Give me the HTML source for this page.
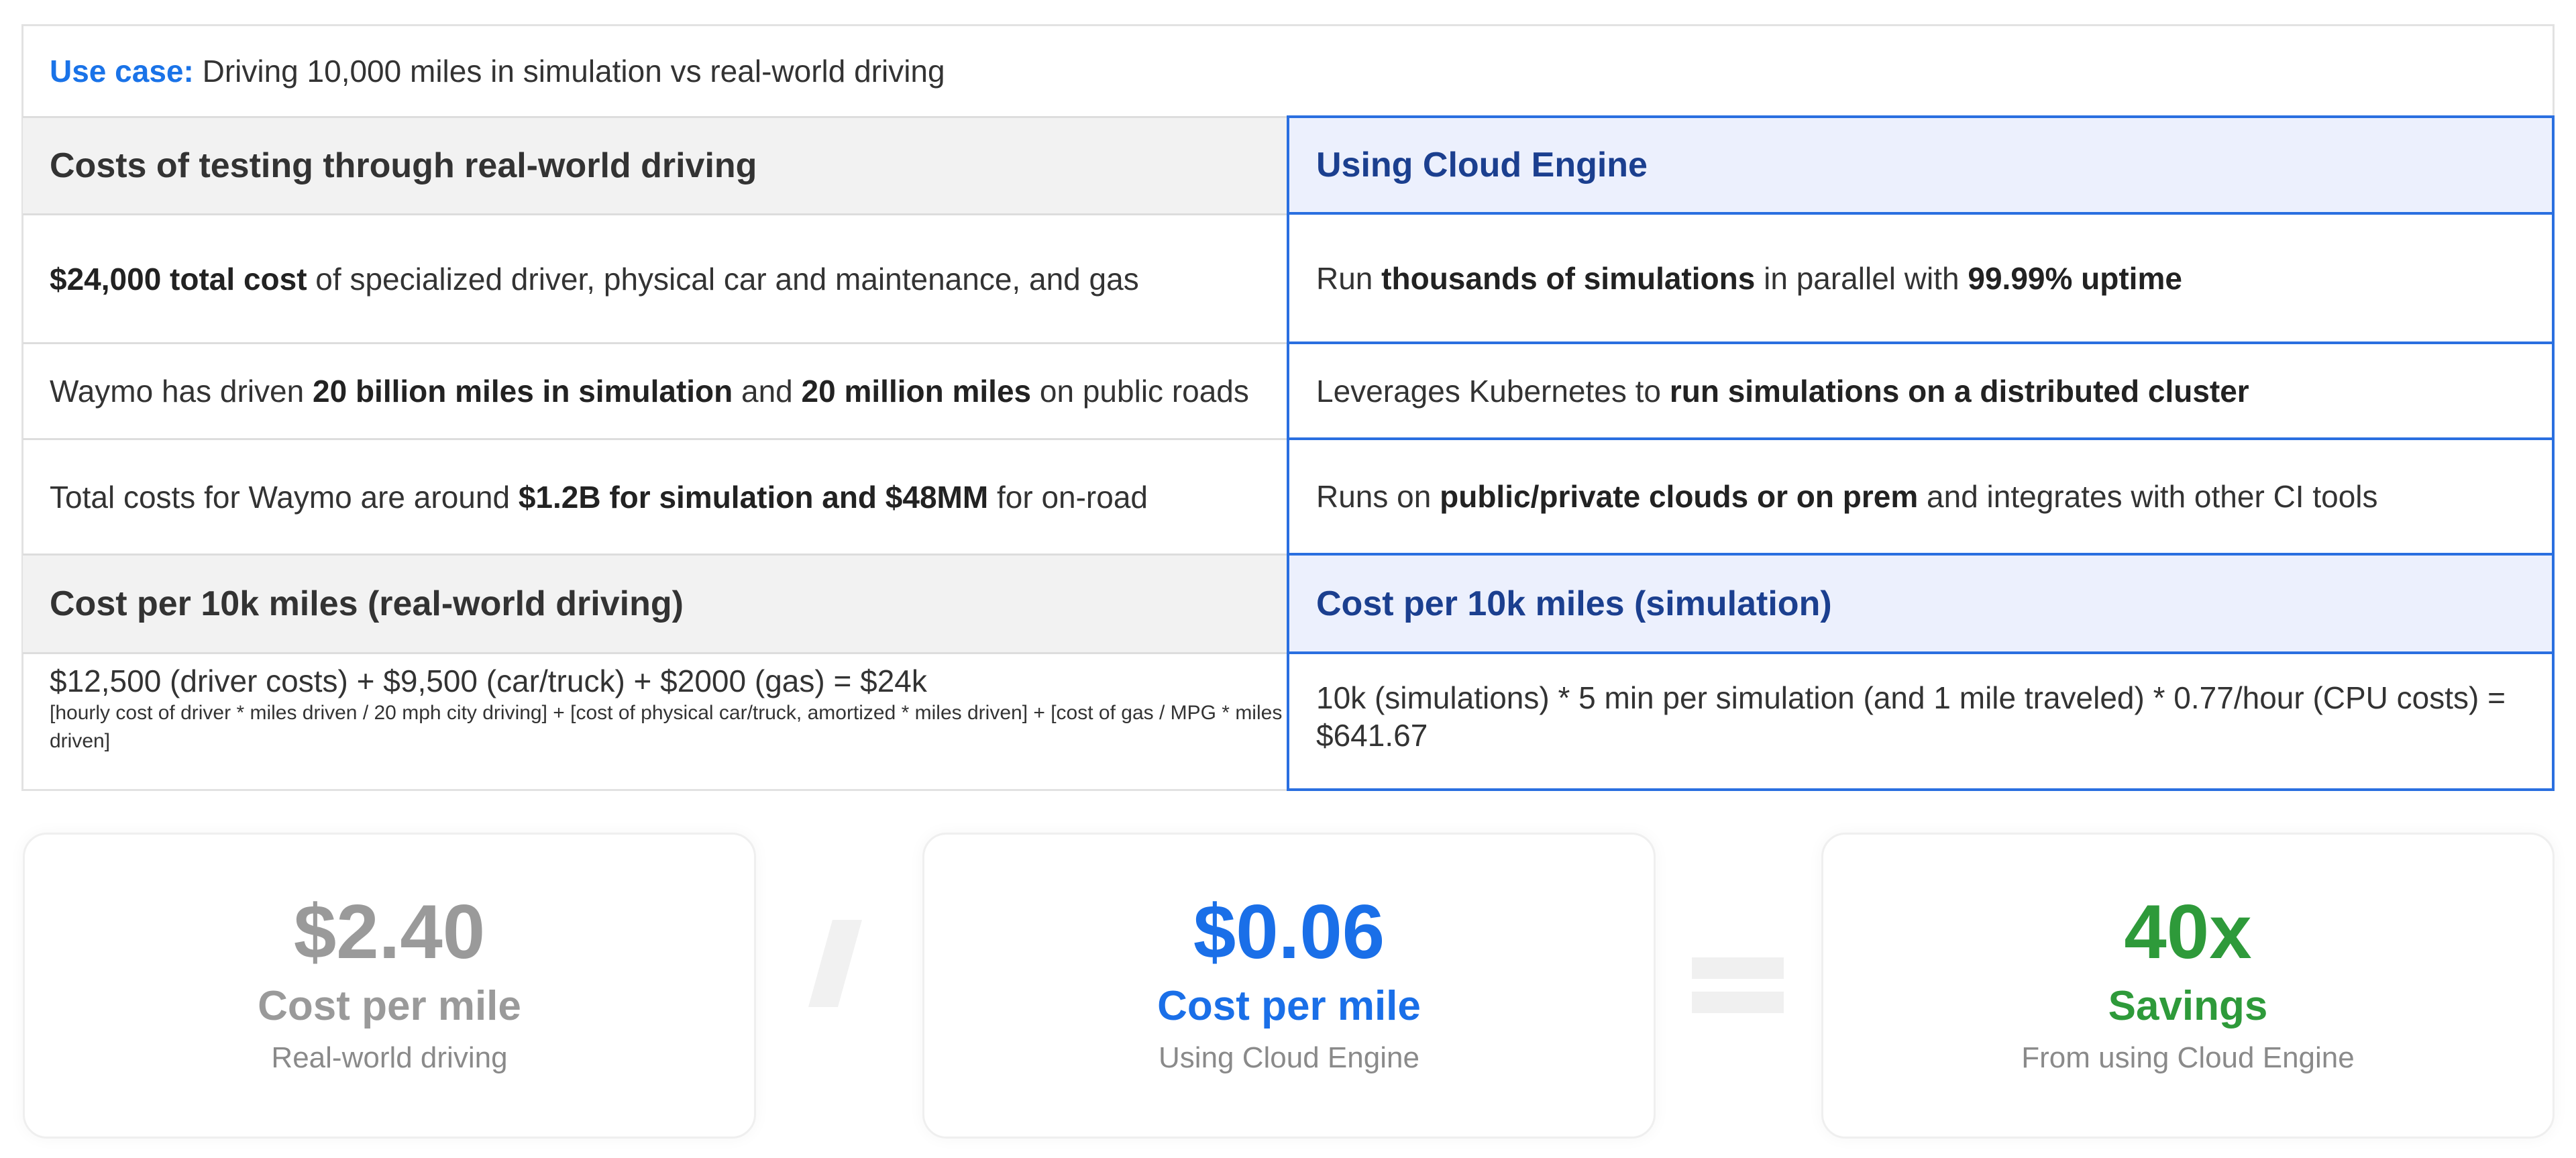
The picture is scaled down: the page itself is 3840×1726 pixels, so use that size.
<!DOCTYPE html>
<html><head><meta charset="utf-8"><style>
*{box-sizing:border-box;margin:0;padding:0}
body{width:3840px;height:1726px;background:#fff;font-family:"Liberation Sans",Arial,sans-serif;position:relative;overflow:hidden;color:#333}
.a{position:absolute}
.cell{position:absolute;display:flex;align-items:center;padding-left:40px;font-size:46px;color:#333;white-space:nowrap}
.hd{font-size:52px;font-weight:bold}
b{font-weight:bold;color:#222}
.card{position:absolute;top:1241px;height:456px;width:1093px;border:3px solid #efefef;border-radius:36px;background:#fff;box-shadow:0 0 24px rgba(0,0,0,0.04);text-align:center}
.big{position:absolute;left:0;right:0;top:80px;font-size:114px;font-weight:bold}
.mid{position:absolute;left:0;right:0;top:220px;font-size:62px;font-weight:bold}
.sub{position:absolute;left:0;right:0;top:308px;font-size:44px;color:#8a8a8a}
</style></head><body>
<div class="a" style="left:32px;top:36px;width:3776px;height:1143px;border:3px solid #e2e2e2"></div>
<div class="cell" style="left:34px;top:38px;width:3772px;height:135px"><span style="color:#1a73e8;font-weight:bold">Use case:</span>&nbsp;Driving 10,000 miles in simulation vs real-world driving</div>
<div class="cell hd" style="left:34px;top:173px;width:1886px;height:148px;background:#f2f2f2;border-top:3px solid #ddd;border-bottom:3px solid #ddd">Costs of testing through real-world driving</div>
<div class="cell" style="left:34px;top:321px;width:1886px;height:192px;border-bottom:3px solid #ddd"><span><b>$24,000 total cost</b> of specialized driver, physical car and maintenance, and gas</span></div>
<div class="cell" style="left:34px;top:513px;width:1886px;height:143px;border-bottom:3px solid #ddd"><span>Waymo has driven <b>20 billion miles in simulation</b> and <b>20 million miles</b> on public roads</span></div>
<div class="cell" style="left:34px;top:656px;width:1886px;height:172px;border-bottom:3px solid #ddd"><span>Total costs for Waymo are around <b>$1.2B for simulation and $48MM</b> for on-road</span></div>
<div class="cell hd" style="left:34px;top:828px;width:1886px;height:147px;background:#f2f2f2;border-bottom:3px solid #ddd">Cost per 10k miles (real-world driving)</div>
<div class="a" style="left:74px;top:988px;width:1844px;font-size:46px;color:#333">$12,500 (driver costs) + $9,500 (car/truck) + $2000 (gas) = $24k
<div style="font-size:30px;line-height:42px;margin-top:0px">[hourly cost of driver * miles driven / 20 mph city driving] + [cost of physical car/truck, amortized * miles driven] + [cost of gas / MPG * miles driven]</div></div>
<div class="a" style="left:1918px;top:172px;width:1890px;height:1007px;border:4px solid #2a6fe0;background:#fff"></div>
<div class="cell hd" style="left:1922px;top:176px;width:1882px;height:144px;background:#ecf0fd;color:#1b3f8f;border-bottom:4px solid #2a6fe0">Using Cloud Engine</div>
<div class="cell" style="left:1922px;top:320px;width:1882px;height:193px;border-bottom:4px solid #2a6fe0"><span>Run <b>thousands of simulations</b> in parallel with <b>99.99% uptime</b></span></div>
<div class="cell" style="left:1922px;top:513px;width:1882px;height:143px;border-bottom:4px solid #2a6fe0"><span>Leverages Kubernetes to <b>run simulations on a distributed cluster</b></span></div>
<div class="cell" style="left:1922px;top:656px;width:1882px;height:172px;border-bottom:4px solid #2a6fe0"><span>Runs on <b>public/private clouds or on prem</b> and integrates with other CI tools</span></div>
<div class="cell hd" style="left:1922px;top:828px;width:1882px;height:147px;background:#ecf0fd;color:#1b3f8f;border-bottom:4px solid #2a6fe0">Cost per 10k miles (simulation)</div>
<div class="a" style="left:1962px;top:1012px;width:1820px;font-size:46px;line-height:56px;color:#333">10k (simulations) * 5 min per simulation (and 1 mile traveled) * 0.77/hour (CPU costs) = $641.67</div>
<div class="card" style="left:34px"><div class="big" style="color:#9a9a9a">$2.40</div><div class="mid" style="color:#9a9a9a">Cost per mile</div><div class="sub">Real-world driving</div></div>
<div class="a" style="left:1205px;top:1371px;width:80px;height:130px;"><svg width="80" height="130"><polygon points="36,0 80,0 44,130 0,130" fill="#f1f1f1"/></svg></div>
<div class="card" style="left:1375px"><div class="big" style="color:#1a6fe8">$0.06</div><div class="mid" style="color:#1a6fe8">Cost per mile</div><div class="sub">Using Cloud Engine</div></div>
<div class="a" style="left:2522px;top:1427px;width:137px;height:32px;background:#f0f0f0"></div>
<div class="a" style="left:2522px;top:1478px;width:137px;height:32px;background:#f0f0f0"></div>
<div class="card" style="left:2715px"><div class="big" style="color:#2e9a3a">40x</div><div class="mid" style="color:#2e9a3a">Savings</div><div class="sub">From using Cloud Engine</div></div>
</body></html>
